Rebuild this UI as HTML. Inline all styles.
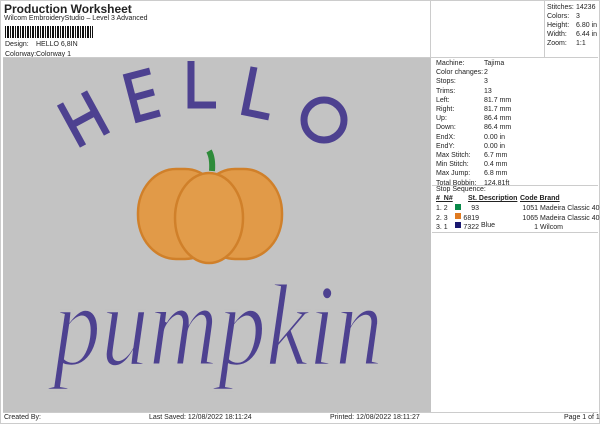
<!DOCTYPE html><html><head><style>
body{margin:0;width:600px;height:424px;background:#fff;font-family:"Liberation Sans",sans-serif;color:#222;position:relative;overflow:hidden}
.a{position:absolute;white-space:nowrap}
.s{font-size:7px}
</style></head><body>
<div class="a" style="left:0;top:0;width:598px;height:422px;border:1px solid #ccc"></div>
<div class="a" style="left:4px;top:2px;font-size:12px;font-weight:bold">Production Worksheet</div>
<div class="a s" style="left:4px;top:15px">Wilcom EmbroideryStudio – Level 3 Advanced</div>
<div class="a" style="left:5px;top:26px;width:88px;height:12px;background:repeating-linear-gradient(90deg,#111 0 1px,#fff 1px 2px,#111 2px 4px,#fff 4px 5px)"></div>
<div class="a" style="left:5px;top:41px;font-size:7px">Design:</div><div class="a s" style="left:36px;top:41px">HELLO 6,8IN</div>
<div class="a s" style="left:5px;top:51px">Colorway:</div><div class="a s" style="left:36px;top:51px">Colorway 1</div>
<div class="a" style="left:430px;top:0;width:1px;height:57px;background:#ccc"></div>
<div class="a" style="left:544px;top:0;width:1px;height:57px;background:#ccc"></div>
<div class="a s" style="left:547px;top:3px;line-height:9px">Stitches:<br>Colors:<br>Height:<br>Width:<br>Zoom:</div>
<div class="a s" style="left:576px;top:3px;line-height:9px">14236<br>3<br>6.80 in<br>6.44 in<br>1:1</div>
<div class="a" style="left:3px;top:57px;width:595px;height:1px;background:#ccc"></div>
<div class="a" style="left:3px;top:58px;width:428px;height:354px;background:#c3c3c3"></div>
<div class="a s" style="left:436px;top:59px;line-height:9.2px">Machine:<br>Color changes:<br>Stops:<br>Trims:<br>Left:<br>Right:<br>Up:<br>Down:<br>EndX:<br>EndY:<br>Max Stitch:<br>Min Stitch:<br>Max Jump:<br>Total Bobbin:</div>
<div class="a s" style="left:484px;top:59px;line-height:9.2px">Tajima<br>2<br>3<br>13<br>81.7 mm<br>81.7 mm<br>86.4 mm<br>86.4 mm<br>0.00 in<br>0.00 in<br>6.7 mm<br>0.4 mm<br>6.8 mm<br>124.81ft</div>
<div class="a" style="left:432px;top:185px;width:166px;height:1px;background:#ccc"></div>
<div class="a s" style="left:436px;top:186px">Stop Sequence:</div>
<div class="a s" style="left:436px;top:195px;font-weight:bold;text-decoration:underline">#&nbsp; N#</div>
<div class="a s" style="left:468px;top:195px;font-weight:bold;text-decoration:underline">St. Description</div>
<div class="a s" style="left:520px;top:195px;font-weight:bold;text-decoration:underline">Code Brand</div>
<div class="a s" style="left:436px;top:204px;line-height:9.5px">1. 2<br>2. 3<br>3. 1</div>
<div class="a" style="left:455px;top:204px;width:6px;height:6px;background:#0a8a4a"></div>
<div class="a" style="left:455px;top:213px;width:6px;height:6px;background:#e07a20"></div>
<div class="a" style="left:455px;top:222px;width:6px;height:6px;background:#1a1870"></div>
<div class="a s" style="left:463px;top:204px;line-height:9.5px;text-align:right;width:16px">93<br>6819<br>7322</div>
<div class="a s" style="left:481px;top:222px">Blue</div>
<div class="a s" style="left:520px;top:204px;line-height:9.5px;text-align:right;width:18px">1051<br>1065<br>1</div>
<div class="a s" style="left:540px;top:204px;line-height:9.5px">Madeira Classic 40<br>Madeira Classic 40<br>Wilcom</div>
<div class="a" style="left:432px;top:232px;width:166px;height:1px;background:#ccc"></div>
<div class="a" style="left:3px;top:412px;width:595px;height:1px;background:#ccc"></div>
<div class="a s" style="left:4px;top:414px">Created By:</div>
<div class="a s" style="left:149px;top:414px">Last Saved: 12/08/2022 18:11:24</div>
<div class="a s" style="left:330px;top:414px">Printed: 12/08/2022 18:11:27</div>
<div class="a s" style="left:564px;top:414px">Page 1 of 1</div>
<svg class="a" style="left:3px;top:58px" width="428" height="354">
<g fill="none" stroke="#4d4190" stroke-width="7" stroke-linecap="butt">
<path d="M57 46 L80 88 M81 34 L104 76 M69 67 L93 54"/>
<path d="M147 13 L124 19 L135 61 L157 55 M129 40 L151 34"/>
<path d="M188 3 L188 47 L213 47"/>
<path d="M251 9 L242 54 L266 59"/>
<circle cx="321" cy="62" r="20"/>
</g>
<path d="M206 93 Q210 100 209 113" stroke="#2e8b3a" stroke-width="6" fill="none"/>
<g stroke="#d0802a" stroke-width="2.5" fill="#e19a48">
<rect x="135" y="111" width="85" height="90" rx="38" ry="44"/>
<rect x="194" y="111" width="85" height="90" rx="38" ry="44"/>
<ellipse cx="206" cy="160" rx="34" ry="45" fill="#e29c4a"/>
</g>
<text x="50" y="307" textLength="330" lengthAdjust="spacingAndGlyphs" font-family="Liberation Serif,serif" font-style="italic" font-size="118" fill="#4d4190" stroke="#c3c3c3" stroke-width="2.5">pumpkin</text>
</svg>
</body></html>
